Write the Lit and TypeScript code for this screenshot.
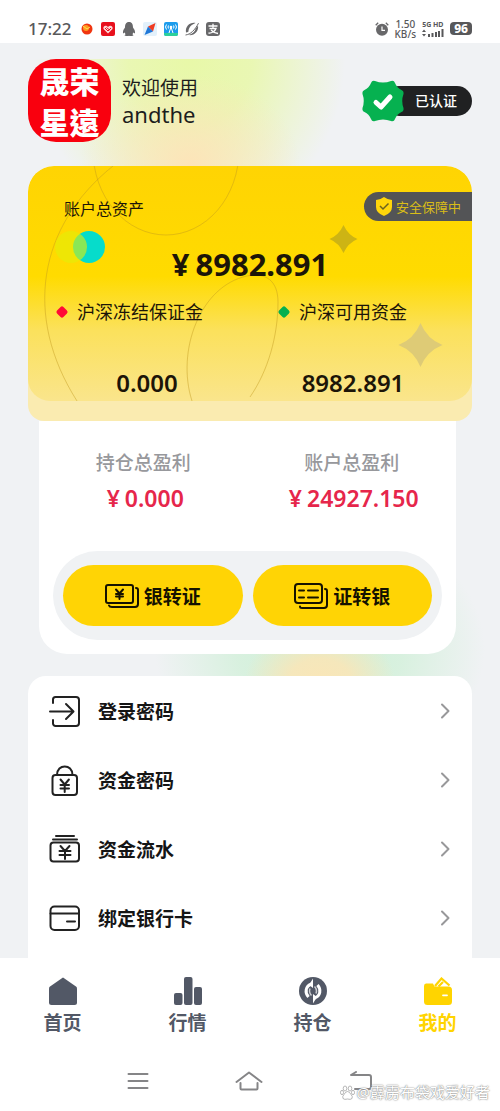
import { LitElement, html, css, svg } from "lit";
import { customElement, property } from "lit/decorators.js";

const rowIcons: Record<string, unknown> = {
  login: svg`<path d="M4 8V4.500a2.500 2.500 0 0 1 2.500-2.500H27a3 3 0 0 1 3 3v23a3 3 0 0 1-3 3H6.500A2.500 2.500 0 0 1 4 28.500V25M1 16.500h23M17 9l7.500 7.500L17 24"/>`,
  lock: svg`<rect x="3.500" y="11" width="24.500" height="20" rx="3"/><path d="M8 11C8 -.5 23.500 -.5 23.500 11M11.500 15.500l4.200 5 4.200-5M15.700 20.500V28M11.500 21h8.500M11.500 24.500h8.500" />`,
  flow: svg`<rect x="1.500" y="9.500" width="28.500" height="19" rx="3"/><path d="M7 3h18M4 6.500h24M11.500 13l4.500 5 4.500-5M16 18v8M10.500 18h11M10.500 22h11"/>`,
  card: svg`<rect x="1.500" y="4.500" width="28.500" height="23.500" rx="4"/><path d="M1.500 11.500H30M18 19.500h8"/>`,
};

const tabIcons: Record<string, unknown> = {
  home: svg`<path d="M14 0.500 27 9.500Q28 10.200 28 11.500V25.500Q28 28 25.500 28H2.500Q0 28 0 25.500V11.500Q0 10.200 1 9.500Z"/>`,
  chart: svg`<rect x="0" y="16" width="8.500" height="12" rx="2"/><rect x="10" y="0" width="8.500" height="28" rx="2"/><rect x="20" y="10" width="8" height="18" rx="2"/>`,
  hold: svg`<circle cx="14" cy="14" r="14"/><path d="M12.500 7C6.500 9 5.500 15.500 9.500 20M15.500 21C21.500 19 22.500 12.500 18.500 8" fill="none" stroke="#fff" stroke-width="3"/><path d="M10 8 14 1.500V11ZM18 20 14 26.500V17Z" fill="#fff"/><path d="M11 11.500Q9.500 15.500 12.500 18.500M17 16.500Q18.500 12.500 15.500 9.500" fill="none" stroke="#fff" stroke-width="1.500" opacity=".7"/>`,
  mine: svg`<path d="M2 6.500Q0 6.500 0 9V24.500Q0 28 3.500 28H24.500Q28 28 28 24.500V13Q28 9.500 24.500 9.500H10.500L9 6.500Z"/><path d="M11 9 17.500 1.500 25.500 8.500M14.500 9.500 19 5" fill="none" stroke="currentColor" stroke-width="2.200"/><path d="M19 18.300h4" stroke="#fff" stroke-width="1.800" stroke-linecap="round"/>`,
};

@customElement("status-bar")
class StatusBar extends LitElement {
  static styles = css`
    :host {
      display: flex;
      align-items: center;
      height: 43px;
      box-sizing: border-box;
      padding: 14px 28px 0;
      background: #fff;
      color: #58585a;
      font-weight: 500;
    }
    .time { font-size: 17px; margin-right: 8px; }
    .apps { display: flex; gap: 7px; }
    .right { display: flex; align-items: center; gap: 6px; margin-left: auto; }
    .speed { font-size: 10px; line-height: 10px; text-align: center; font-weight: 500; }
    .signal { display: grid; font-size: 7px; line-height: 8px; font-weight: 700; }
    .battery {
      background: #58585a; color: #fff; border-radius: 4px;
      font-size: 12px; line-height: 13px; font-weight: 800; padding: 0 4px;
    }
    svg { display: block; }
  `;
  render() {
    return html`
      <span class="time">17:22</span>
      <span class="apps">
        <svg width="14" height="14"><circle cx="7" cy="7" r="5.500" fill="#f03510"/><circle cx="6" cy="6" r="3" fill="#ff9b20"/><path d="M3 4l4 3 3-2" stroke="#ffdf50" fill="none"/></svg>
        <svg width="14" height="14"><rect width="14" height="14" rx="2" fill="#e8101d"/><path d="M7 11.500 2.500 7C1.500 4 5 2.500 7 5c2-2.500 5.500-1 4.500 2Z" fill="#ffd8d8"/><path d="M4 6l3 3 3-3M5.500 5.500 8.500 8" stroke="#e8101d" fill="none"/></svg>
        <svg width="14" height="14"><path d="M7 0C3.800 0 3 2.500 3 5.500 1.500 7.500.5 9.500 1.200 11.500l1.500-1 .8 1.800-1 1.200q2 1 4.500.2 2.500.8 4.500-.2l-1-1.200.8-1.800 1.500 1C13.500 9.500 12.500 7.500 11 5.500 11 2.500 10.200 0 7 0Z" fill="#68686a"/></svg>
        <svg width="14" height="14"><rect width="14" height="14" rx="2" fill="#e3f1fb"/><path d="M12.500 1 10 9.500 5 4.500Z" fill="#ef3b22"/><path d="M1.500 13 5 4.500 10 9.500Z" fill="#1f78d8"/></svg>
        <svg width="14" height="14"><rect width="14" height="14" rx="2" fill="#1c9cec"/><path d="M0 11h14v1q0 2-2 2H2q-2 0-2-2Z" fill="#2cd09a"/><path d="M2.500 2.500q-2 2.500 0 5M4.500 3.500q-1 1.500 0 3M11.500 2.500q2 2.500 0 5M9.500 3.500q1 1.500 0 3M7 5l-2 6M7 5l2 6" stroke="#fff" fill="none"/><circle cx="7" cy="5" r="1.300" fill="#fff"/></svg>
        <svg width="14" height="14" fill="#68686a"><path d="M10.500 1C5 0 0 4.500 1 10.500 2 10.500 2.800 10 3.500 9.500 3.500 5.500 6.500 2.500 10.500 1ZM3.500 13C9 14 14 9.500 13 3.500 12 5 11.500 5.500 10.700 6.500 10 9.500 7.500 12 3.500 13Z"/><path d="M.5 13C5.500 12.500 10 8 13.500 1.200" fill="none" stroke="#68686a"/></svg>
        <svg width="14" height="14"><rect width="14" height="14" rx="3" fill="#68686a"/><path d="M2.500 4h9M7 1.800v4.400M3.500 6.500h6.500C9 9.500 5.500 11.500 2.500 11M5 8q3 3 7 3.500" stroke="#fff" stroke-width="1.300" fill="none"/></svg>
      </span>
      <span class="right">
        <svg width="14" height="14"><circle cx="7" cy="7.800" r="6" fill="#68686a"/><path d="M.7 3.200 3.200.8M13.300 3.200 10.800.8" stroke="#68686a" stroke-width="1.300"/><path d="M7 4.500v3.800h3" stroke="#fff" stroke-width="1.200" fill="none"/></svg>
        <span class="speed">1.50<br />KB/s</span>
        <span class="signal">5G HD
          <svg width="22" height="8" fill="#58585a"><path d="M0 3 2 .5 4 3ZM0 5h4L2 7.500ZM6 5h2v3H6ZM9.500 4h2v4h-2ZM13 3h2v5h-2ZM16 2h2v6h-2ZM19.500 0h2v8h-2Z"/></svg>
        </span>
        <span class="battery">96</span>
      </span>
    `;
  }
}

@customElement("asset-card")
class AssetCard extends LitElement {
  static styles = css`
    :host { display: block; position: relative; z-index: 1; background: #faebb0; border-radius: 26px 26px 16px 16px; overflow: hidden; color: #1c1508; }
    .art { position: absolute; inset: 0 0 auto 0; width: 100%; height: 235px; border-radius: 26px 26px 22px 22px; background: linear-gradient(#ffd403, #ffdb00 47%, #fbe15c 70%, #fae58c); }
    .body { position: relative; padding-bottom: 22px; }
    .head { display: flex; justify-content: space-between; align-items: flex-start; padding: 26px 0 0 36px; }
    .title { font-size: 16px; line-height: 24px; padding-top: 5px; }
    .safe { display: flex; align-items: center; gap: 4px; height: 29px; padding: 0 11px 0 12px; border-radius: 15px 0 0 15px; background: #535456; color: #d9bd17; font-size: 13px; }
    .amount { margin-top: 25px; text-align: center; font-size: 31px; line-height: 36px; font-weight: 700; }
    .amount span { margin-right: 6px; }
    .labels, .values { display: grid; grid-template-columns: 1fr 1fr; }
    .labels { margin-top: 17px; font-size: 18px; line-height: 26px; }
    .label { display: flex; align-items: center; gap: 8px; padding-left: 27px; }
    .values { margin-top: 42px; padding: 0 16px; text-align: center; font-size: 24px; line-height: 32px; font-weight: 600; }
  `;
  render() {
    return html`
      <svg class="art" viewBox="0 0 444 235" preserveAspectRatio="xMidYMin slice" aria-hidden="true">
        <g fill="none" stroke="#c09a20" stroke-opacity=".45">
          <ellipse cx="138" cy="-16" rx="73" ry="85" />
          <path d="M85 0C10 60-5 150 49 235M164 235C148 185 172 120 219 110C238 106 250 115 250 136C250 170 240 205 222 231" />
        </g>
        <circle cx="61" cy="81" r="16" fill="#06dccb" />
        <circle cx="43" cy="81" r="16" fill="#e2ee08" fill-opacity=".6" />
        <path d="M315.500 59Q320 69 329.500 73Q320 77 315.500 87Q311 77 301.500 73Q311 69 315.500 59Z" fill="#cdb414" />
        <path d="M392.500 157Q399 173 414.500 179Q399 185 392.500 201Q386 185 370.500 179Q386 173 392.500 157Z" fill="#decb76" />
      </svg>
      <div class="body">
        <div class="head">
          <span class="title">账户总资产</span>
          <span class="safe">
            <svg width="16" height="19"><path d="M8 0q4 3 8 3v7q0 6-8 9-8-3-8-9V3q4 0 8-3Z" fill="#ffd60a"/><path d="M4 9l3 3 5.500-5.500" stroke="#6b6320" stroke-width="1.500" fill="none"/></svg>
            安全保障中
          </span>
        </div>
        <div class="amount"><span>¥</span>8982.891</div>
        <div class="labels">
          <span class="label"><svg width="14" height="14"><rect x="2.500" y="2.500" width="9" height="9" rx="2" transform="rotate(45 7 7)" fill="#ff0a36"/></svg>沪深冻结保证金</span>
          <span class="label"><svg width="14" height="14"><rect x="2.500" y="2.500" width="9" height="9" rx="2" transform="rotate(45 7 7)" fill="#06b04f"/></svg>沪深可用资金</span>
        </div>
        <div class="values"><span>0.000</span><span>8982.891</span></div>
      </div>
    `;
  }
}

@customElement("menu-row")
class MenuRow extends LitElement {
  @property() icon = "";
  @property() label = "";
  static styles = css`
    :host { display: block; }
    .row { display: flex; align-items: center; width: 100%; height: 69px; padding: 0 21px; border: 0; background: none; font: inherit; color: #151515; font-size: 19px; font-weight: 700; text-align: left; cursor: pointer; }
    .label { flex: 1; margin-left: 17px; }
    svg { fill: none; stroke: #222; stroke-width: 2; stroke-linejoin: round; stroke-linecap: round; }
    .chevron { stroke: #98989a; }
  `;
  render() {
    return html`<button class="row">
      <svg width="32" height="32">${rowIcons[this.icon]}</svg>
      <span class="label">${this.label}</span>
      <svg class="chevron" width="12" height="16"><path d="M3 1.500 9.500 8 3 14.500"/></svg>
    </button>`;
  }
}

@customElement("app-root")
class AppRoot extends LitElement {
  static styles = css`
    :host { display: flex; flex-direction: column; height: 100vh; overflow: hidden; position: relative; background: #f0f2f4; font-family: "Noto Sans", "Noto Sans CJK SC", sans-serif; color: #1d1d1d; }
    .content { flex: 1; min-height: 0; overflow: hidden; padding-top: 16px; }
    .glow {
      padding: 0 28px;
      background:
        radial-gradient(ellipse 110px 90px at 38% 105px, #fde4b8 0%, rgba(253, 228, 184, 0) 100%),
        radial-gradient(ellipse 155px 170px at 38% 0px, #e8f8a8 0%, rgba(232, 248, 168, .85) 40%, rgba(232, 248, 168, 0) 100%),
        radial-gradient(ellipse 75px 50px at 64% 620px, #f9e6b8 0%, rgba(249, 230, 184, .9) 40%, rgba(249, 230, 184, 0) 100%),
        radial-gradient(ellipse 165px 130px at 64% 590px, #cef0d6 0%, rgba(206, 240, 214, .7) 50%, rgba(214, 243, 232, 0) 100%);
    }
    .profile { display: flex; align-items: center; height: 83px; margin-bottom: 24px; }
    .logo { display: grid; grid-template-columns: 30px 30px; grid-template-rows: 41px 41px; place-content: center; place-items: center; width: 83px; height: 83px; border-radius: 28px; overflow: hidden; background: #f9000e; color: #fff; font-family: "Noto Sans CJK TC", sans-serif; font-weight: 900; font-size: 30px; line-height: 40px; }
    .who { margin-left: 11px; font-size: 19px; line-height: 26px; }
    .name { font-size: 22px; }
    .verified { display: flex; align-items: center; margin-left: auto; }
    .seal { position: relative; margin-right: -20px; }
    .pill { height: 30px; line-height: 30px; padding: 0 15px 0 31px; border-radius: 15px; background: #202122; color: #fff; font-size: 14px; font-weight: 500; }
    .panel { margin: 0 16px 22px 11px; padding: 28px 14px 14px; background: #fff; border-radius: 0 0 28px 28px; }
    .profits { display: grid; grid-template-columns: 1fr 1fr; margin: 0 -14px 32px; text-align: center; }
    .caption { color: #97989c; font-size: 19px; line-height: 28px; font-weight: 500; }
    .profit { color: #e6264b; font-size: 23px; line-height: 42px; font-weight: 600; padding-left: 4px; }
    .profit span { margin-right: 5px; }
    .tray { display: grid; grid-template-columns: 1fr 1fr; gap: 10px; padding: 14px 10px; border-radius: 45px; background: #f0f2f4; }
    .transfer { display: flex; align-items: center; justify-content: center; gap: 5px; height: 61px; padding: 0; border: 0; border-radius: 31px; background: #ffd405; color: #151200; font: inherit; font-size: 19px; font-weight: 700; cursor: pointer; }
    .transfer svg { fill: none; stroke: currentColor; stroke-width: 2; stroke-linecap: round; stroke-linejoin: round; }
    .menu { background: #fff; border-radius: 18px 18px 0 0; padding-bottom: 40px; }
    .tabs { display: grid; grid-template-columns: repeat(4, 1fr); height: 92px; box-sizing: border-box; padding-top: 19px; background: #fff; }
    .tab { display: grid; justify-items: center; align-content: start; gap: 5px; color: #525866; font-size: 19px; line-height: 26px; font-weight: 700; text-decoration: none; }
    .tab svg { fill: currentColor; }
    .active { color: #ffd400; }
    .system { display: flex; justify-content: center; align-items: center; gap: 86px; height: 61px; background: #fff; }
    .key { display: block; padding: 0; border: 0; background: none; }
    .key svg { display: block; fill: none; stroke: #858587; stroke-width: 2; stroke-linecap: round; stroke-linejoin: round; }
    .mark { position: absolute; right: 10px; bottom: 8px; display: flex; align-items: center; gap: 2px; font-size: 15px; line-height: 22px; color: #fff; text-shadow: 0 0 1px #777, 0 0 2px #999; pointer-events: none; }
  `;
  render() {
    return html`
      <status-bar></status-bar>
      <main class="content">
        <div class="glow">
          <header class="profile">
            <div class="logo"><span>晟</span><span>荣</span><span>星</span><span>遠</span></div>
            <div class="who">欢迎使用<div class="name">andthe</div></div>
            <div class="verified">
              <svg class="seal" width="42" height="42" viewBox="-21 -21 42 42">
                <path d="M-8-20Q0-17 8-20Q11-21 12-18Q14-13 18.500-11Q21-10 20.500-7Q18 0 20.500 7Q21 10 18.500 11Q14 13 12 18Q11 21 8 20Q0 17-8 20Q-11 21-12 18Q-14 13-18.500 11Q-21 10-20.500 7Q-18 0-20.500-7Q-21-10-18.500-11Q-14-13-12-18Q-11-21-8-20Z" fill="#06b150"/>
                <path d="M-7 1.500-2 6 7-4" fill="none" stroke="#fff" stroke-width="5" stroke-linecap="round" stroke-linejoin="round"/>
              </svg>
              <span class="pill">已认证</span>
            </div>
          </header>
          <asset-card></asset-card>
          <section class="panel">
            <div class="profits">
              <div><div class="caption">持仓总盈利</div><div class="profit"><span>¥</span>0.000</div></div>
              <div><div class="caption">账户总盈利</div><div class="profit"><span>¥</span>24927.150</div></div>
            </div>
            <div class="tray">
              <button class="transfer">
                <svg width="34" height="28"><rect x="1" y="3" width="27" height="18" rx="2"/><path d="M31 6q2 0 2 2v14q0 3-3 3H7q-2.500 0-3-1.500M11 7.500l3.500 4 3.500-4M14.500 11.500v5.500M11 12h7M11 14.500h7"/></svg>
                银转证
              </button>
              <button class="transfer">
                <svg width="34" height="28"><rect x="1" y="2" width="27" height="19" rx="3"/><path d="M31 7q2 0 2 2v14q0 3-3 3H8q-2 0-2-1.500M5 8.500h5M14 8.500h10M5 15.500h5M14 15.500h10"/></svg>
                证转银
              </button>
            </div>
          </section>
          <section class="menu">
            <menu-row icon="login" label="登录密码"></menu-row>
            <menu-row icon="lock" label="资金密码"></menu-row>
            <menu-row icon="flow" label="资金流水"></menu-row>
            <menu-row icon="card" label="绑定银行卡"></menu-row>
          </section>
        </div>
      </main>
      <nav class="tabs">
        ${[["home", "首页"], ["chart", "行情"], ["hold", "持仓"], ["mine", "我的"]].map(
          ([icon, label]) => html`<a href="#${icon}" class=${icon === "mine" ? "tab active" : "tab"}>
            <svg width="28" height="28">${tabIcons[icon]}</svg>${label}</a>`
        )}
      </nav>
      <div class="system">
        <button class="key" aria-label="菜单"><svg width="22" height="20"><path d="M1.500 3h19M1.500 10h19M1.500 17h19"/></svg></button>
        <button class="key" aria-label="主屏幕"><svg width="28" height="20"><path d="M1.500 11 14 1.500 26.500 11M5.500 12v5.500q0 1 1 1h15q1 0 1-1V12"/></svg></button>
        <button class="key" aria-label="返回"><svg width="24" height="20"><path d="M7 1 2 4h18q2 0 2 2v10q0 2-2 2H6"/></svg></button>
      </div>
      <div class="mark">
        <svg width="15" height="15" fill="#fff" stroke="#999" stroke-width=".7"><ellipse cx="5" cy="3.500" rx="1.800" ry="2.500"/><ellipse cx="10" cy="3.500" rx="1.800" ry="2.500"/><ellipse cx="2" cy="7.500" rx="1.500" ry="2.200"/><ellipse cx="13" cy="7.500" rx="1.500" ry="2.200"/><path d="M7.500 6.500q2 0 3.500 3 2 2 1 4-1.500 1.500-4.500.5-3 1-4.500-.5-1-2 1-4 1.500-3 3.500-3Z"/></svg>
        <span>@霹雳布袋戏爱好者</span>
      </div>
    `;
  }
}
